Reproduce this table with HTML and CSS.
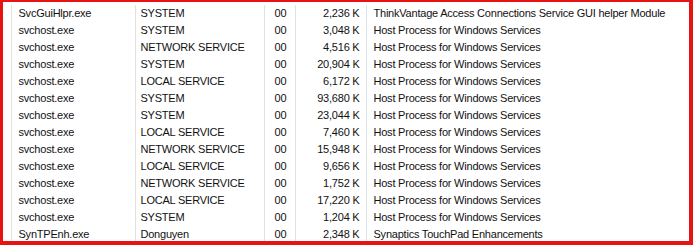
FILE: index.html
```html
<!DOCTYPE html>
<html>
<head>
<meta charset="utf-8">
<link rel="stylesheet" href="styles.css">
</head>
<body>
<div class="frame">
<table class="procs">
<colgroup><col class="c0"><col class="c1"><col class="c2"><col class="c3"><col class="c4"><col class="c5"></colgroup>
<tbody>
<tr><td></td><td>SvcGuiHlpr.exe</td><td>SYSTEM</td><td class="cpu">00</td><td class="mem">2,236 K</td><td class="desc">ThinkVantage Access Connections Service GUI helper Module</td></tr>
<tr><td></td><td>svchost.exe</td><td>SYSTEM</td><td class="cpu">00</td><td class="mem">3,048 K</td><td class="desc">Host Process for Windows Services</td></tr>
<tr><td></td><td>svchost.exe</td><td>NETWORK SERVICE</td><td class="cpu">00</td><td class="mem">4,516 K</td><td class="desc">Host Process for Windows Services</td></tr>
<tr><td></td><td>svchost.exe</td><td>SYSTEM</td><td class="cpu">00</td><td class="mem">20,904 K</td><td class="desc">Host Process for Windows Services</td></tr>
<tr><td></td><td>svchost.exe</td><td>LOCAL SERVICE</td><td class="cpu">00</td><td class="mem">6,172 K</td><td class="desc">Host Process for Windows Services</td></tr>
<tr><td></td><td>svchost.exe</td><td>SYSTEM</td><td class="cpu">00</td><td class="mem">93,680 K</td><td class="desc">Host Process for Windows Services</td></tr>
<tr><td></td><td>svchost.exe</td><td>SYSTEM</td><td class="cpu">00</td><td class="mem">23,044 K</td><td class="desc">Host Process for Windows Services</td></tr>
<tr><td></td><td>svchost.exe</td><td>LOCAL SERVICE</td><td class="cpu">00</td><td class="mem">7,460 K</td><td class="desc">Host Process for Windows Services</td></tr>
<tr><td></td><td>svchost.exe</td><td>NETWORK SERVICE</td><td class="cpu">00</td><td class="mem">15,948 K</td><td class="desc">Host Process for Windows Services</td></tr>
<tr><td></td><td>svchost.exe</td><td>LOCAL SERVICE</td><td class="cpu">00</td><td class="mem">9,656 K</td><td class="desc">Host Process for Windows Services</td></tr>
<tr><td></td><td>svchost.exe</td><td>NETWORK SERVICE</td><td class="cpu">00</td><td class="mem">1,752 K</td><td class="desc">Host Process for Windows Services</td></tr>
<tr><td></td><td>svchost.exe</td><td>LOCAL SERVICE</td><td class="cpu">00</td><td class="mem">17,220 K</td><td class="desc">Host Process for Windows Services</td></tr>
<tr><td></td><td>svchost.exe</td><td>SYSTEM</td><td class="cpu">00</td><td class="mem">1,204 K</td><td class="desc">Host Process for Windows Services</td></tr>
<tr><td></td><td>SynTPEnh.exe</td><td>Donguyen</td><td class="cpu">00</td><td class="mem">2,348 K</td><td class="desc">Synaptics TouchPad Enhancements</td></tr>
</tbody>
</table>
</div>
</body>
</html>
```
FILE: styles.css
```css
html, body {
  margin: 0;
  padding: 0;
  background: #ffffff;
}
.frame {
  box-sizing: border-box;
  width: 693px;
  height: 245px;
  border-style: solid;
  border-color: #e81212;
  border-width: 2px 4px 4px 3px;
  padding-top: 3px;
  background: #ffffff;
  overflow: hidden;
}
.procs {
  border-collapse: collapse;
  table-layout: fixed;
  width: 686px;
  font-family: "Liberation Sans", Arial, sans-serif;
  font-size: 11px;
  letter-spacing: -0.22px;
  color: #111;
}
.c0 { width: 8px; }
.c1 { width: 124px; }
.c2 { width: 129px; }
.c3 { width: 31px; }
.c4 { width: 71px; }
.c5 { width: auto; }
.procs td {
  height: 17px;
  padding: 0 0 0 7px;
  border-left: 1px solid #e2e2e2;
  white-space: nowrap;
  overflow: hidden;
  line-height: 17px;
}
.procs td:first-child {
  border-left: none;
  padding: 0;
}
.procs td:nth-child(3) {
  padding-left: 5px;
}
.procs td.cpu {
  padding-left: 10px;
}
.procs td.mem {
  text-align: right;
  padding: 0 6px 0 0;
}
.procs td.desc {
  padding-left: 7px;
}
```
